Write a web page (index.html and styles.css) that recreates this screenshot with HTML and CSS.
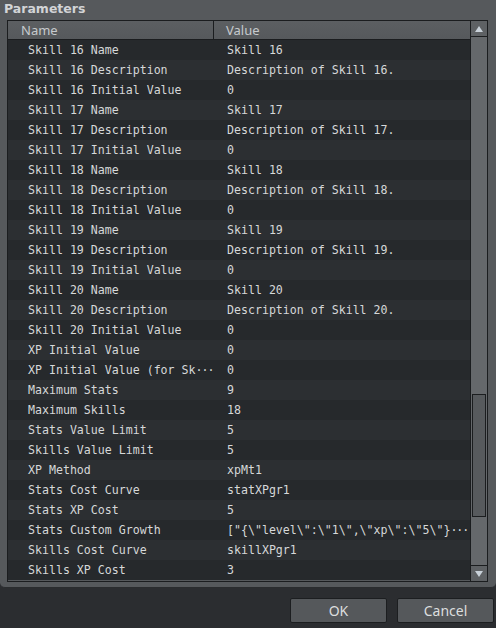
FILE: index.html
```html
<!DOCTYPE html>
<html>
<head>
<meta charset="utf-8">
<link rel="stylesheet" href="styles.css">
</head>
<body>
<div class="panel">
  <div class="title">Parameters</div>
  <div class="table">
    <div class="main">
      <div class="head">
        <div class="hname">Name</div>
        <div class="hvalue">Value</div>
      </div>
      <div class="rows">
        <div class="row"><span class="n">Skill 16 Name</span><span class="v">Skill 16</span></div>
        <div class="row"><span class="n">Skill 16 Description</span><span class="v">Description of Skill 16.</span></div>
        <div class="row"><span class="n">Skill 16 Initial Value</span><span class="v">0</span></div>
        <div class="row"><span class="n">Skill 17 Name</span><span class="v">Skill 17</span></div>
        <div class="row"><span class="n">Skill 17 Description</span><span class="v">Description of Skill 17.</span></div>
        <div class="row"><span class="n">Skill 17 Initial Value</span><span class="v">0</span></div>
        <div class="row"><span class="n">Skill 18 Name</span><span class="v">Skill 18</span></div>
        <div class="row"><span class="n">Skill 18 Description</span><span class="v">Description of Skill 18.</span></div>
        <div class="row"><span class="n">Skill 18 Initial Value</span><span class="v">0</span></div>
        <div class="row"><span class="n">Skill 19 Name</span><span class="v">Skill 19</span></div>
        <div class="row"><span class="n">Skill 19 Description</span><span class="v">Description of Skill 19.</span></div>
        <div class="row"><span class="n">Skill 19 Initial Value</span><span class="v">0</span></div>
        <div class="row"><span class="n">Skill 20 Name</span><span class="v">Skill 20</span></div>
        <div class="row"><span class="n">Skill 20 Description</span><span class="v">Description of Skill 20.</span></div>
        <div class="row"><span class="n">Skill 20 Initial Value</span><span class="v">0</span></div>
        <div class="row"><span class="n">XP Initial Value</span><span class="v">0</span></div>
        <div class="row"><span class="n">XP Initial Value (for Sk<span class="ell">···</span></span><span class="v">0</span></div>
        <div class="row"><span class="n">Maximum Stats</span><span class="v">9</span></div>
        <div class="row"><span class="n">Maximum Skills</span><span class="v">18</span></div>
        <div class="row"><span class="n">Stats Value Limit</span><span class="v">5</span></div>
        <div class="row"><span class="n">Skills Value Limit</span><span class="v">5</span></div>
        <div class="row"><span class="n">XP Method</span><span class="v">xpMt1</span></div>
        <div class="row"><span class="n">Stats Cost Curve</span><span class="v">statXPgr1</span></div>
        <div class="row"><span class="n">Stats XP Cost</span><span class="v">5</span></div>
        <div class="row"><span class="n">Stats Custom Growth</span><span class="v">["{\"level\":\"1\",\"xp\":\"5\"}<span class="ell">···</span></span></div>
        <div class="row"><span class="n">Skills Cost Curve</span><span class="v">skillXPgr1</span></div>
        <div class="row"><span class="n">Skills XP Cost</span><span class="v">3</span></div>
      </div>
    </div>
    <div class="scrollbar">
      <div class="sbtn up"><svg width="8" height="6" viewBox="0 0 8 6"><path d="M4 0 L8 6 L0 6 Z" fill="#c9d1d9"/></svg></div>
      <div class="track"><div class="thumb"></div></div>
      <div class="sbtn down"><svg width="8" height="6" viewBox="0 0 8 6"><path d="M0 0 L8 0 L4 6 Z" fill="#c9d1d9"/></svg></div>
    </div>
  </div>
</div>
<div class="footer">
  <button class="btn">OK</button>
  <button class="btn">Cancel</button>
</div>
</body>
</html>
```
FILE: styles.css
```css
html, body {
  margin: 0;
  padding: 0;
}
body {
  background: #2b2d30;
  width: 496px;
  height: 628px;
  overflow: hidden;
}
.panel {
  background: #56595c;
  height: 588px;
  border-bottom: 1px solid #2a2c2e;
  border-bottom-left-radius: 5px;
  border-bottom-right-radius: 5px;
  box-sizing: border-box;
  padding-top: 0;
}
.title {
  font-family: "DejaVu Sans", sans-serif;
  font-weight: bold;
  font-size: 12.5px;
  color: #d2d4d6;
  height: 20px;
  line-height: 17px;
  padding-left: 4px;
}
.table {
  margin-left: 7px;
  width: 481px;
  height: 562px;
  box-sizing: border-box;
  border: 1px solid #1b1d1f;
  display: flex;
}
.main {
  width: 462px;
  display: flex;
  flex-direction: column;
}
.head {
  height: 19px;
  box-sizing: border-box;
  border-bottom: 1px solid #1b1d1f;
  background: linear-gradient(#5c5f62, #56595c);
  display: flex;
  font-family: "Noto Sans", sans-serif;
  font-size: 13px;
  color: #c6cacd;
  line-height: 19px;
}
.hname {
  width: 206px;
  padding-left: 13px;
  box-sizing: border-box;
  border-right: 1px solid #1b1d1f;
}
.hvalue {
  padding-left: 12px;
}
.rows {
  font-family: "DejaVu Sans Mono", monospace;
  font-size: 11.6px;
  color: #d6d8d9;
}
.row {
  height: 20px;
  line-height: 20px;
  display: flex;
  background: #26292c;
  white-space: nowrap;
}
.row:nth-child(even) {
  background: #2c2f32;
}
.n {
  width: 207px;
  padding-left: 20px;
  box-sizing: border-box;
  overflow: hidden;
}
.v {
  padding-left: 12px;
}
.ell {
  letter-spacing: -1px;
}
.scrollbar {
  width: 17px;
  box-sizing: border-box;
  border-left: 1px solid #1b1d1f;
  background: #65686b;
  display: flex;
  flex-direction: column;
}
.sbtn {
  height: 16px;
  box-sizing: border-box;
  display: flex;
  align-items: center;
  justify-content: center;
  background: #5e6164;
}
.sbtn.up {
  border-bottom: 1px solid #1b1d1f;
}
.sbtn.down {
  border-top: 1px solid #1b1d1f;
}
.track {
  flex: 1;
  padding-top: 357px;
  padding-left: 1px;
}
.thumb {
  width: 14px;
  height: 123px;
  box-sizing: border-box;
  border: 1px solid #1b1d1f;
  background: #575a5d;
}
.footer {
  display: flex;
  justify-content: flex-end;
  gap: 10px;
  padding-top: 10px;
  padding-right: 2px;
}
.btn {
  width: 97px;
  height: 25px;
  box-sizing: border-box;
  border: 1px solid #1c1e20;
  border-radius: 2px;
  background: #55585b;
  color: #dcdedf;
  font-family: "Noto Sans", sans-serif;
  font-size: 14px;
  padding: 0;
  line-height: 22px;
}
```
